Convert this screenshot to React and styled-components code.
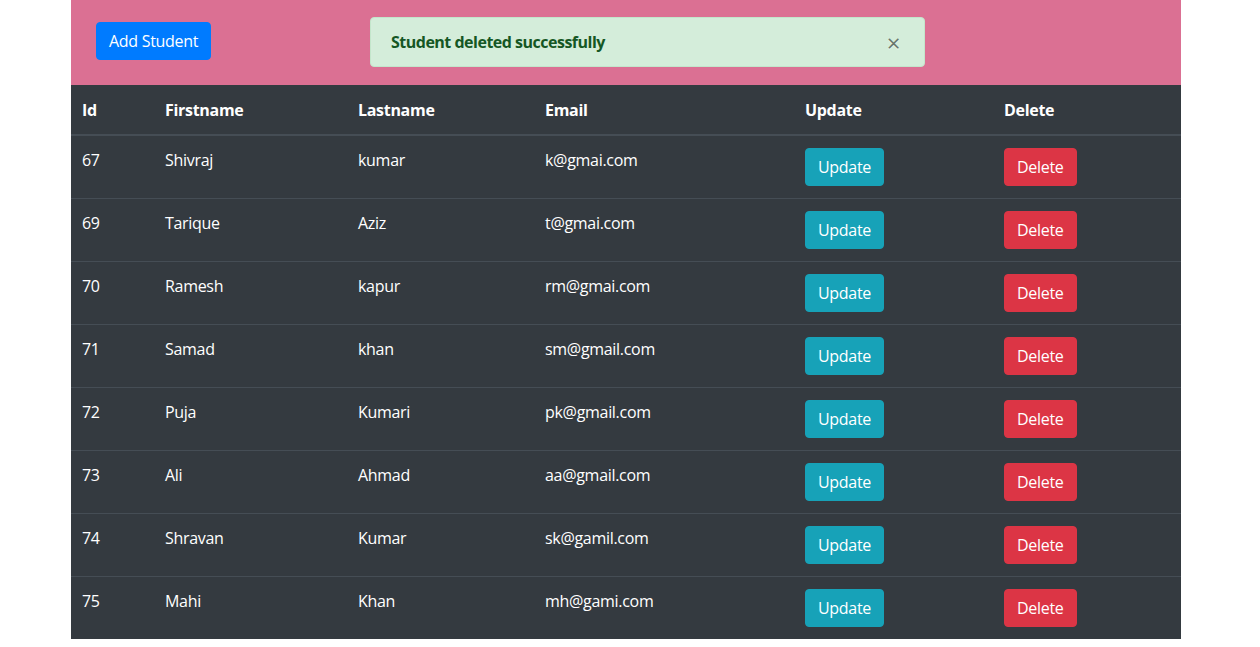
import React from "react";
import styled, { createGlobalStyle } from "styled-components";

const Global = createGlobalStyle`
  html, body { margin: 0; padding: 0; background: #fff; }
  body {
    font-family: "Open Sans", "Noto Sans", sans-serif;
    font-size: 16px;
    line-height: 1.5;
    letter-spacing: -0.3px;
    color: #212529;
  }
  * { box-sizing: border-box; }
`;

const Container = styled.div`
  width: 1110px;
  margin-left: 71px;
`;

const Header = styled.header`
  height: 85px;
  padding-bottom: 2px;
  background: palevioletred;
  display: grid;
  grid-template-columns: 299px 555px;
  align-items: center;
`;

const HeaderCell = styled.div`
  display: flex;
  align-items: center;
  padding-left: 25px;
`;

const Button = styled.button`
  font-family: inherit;
  font-size: 16px;
  line-height: 24px;
  letter-spacing: -0.3px;
  padding: 6px 12px;
  border: 1px solid ${(p) => p.$bg};
  border-radius: 4px;
  background: ${(p) => p.$bg};
  color: #fff;
  cursor: pointer;
  margin-top: ${(p) => p.$mt || 0}px;
`;

const Alert = styled.div`
  position: relative;
  width: 555px;
  height: 50px;
  padding: 12px 20px;
  background: #d4edda;
  border: 1px solid #c3e6cb;
  border-radius: 4px;
  color: #155724;
  font-weight: 700;
  letter-spacing: -0.5px;
  display: flex;
  align-items: center;
`;

const Close = styled.span`
  position: absolute;
  right: 24px;
  top: 50%;
  transform: translateY(-45%);
  font-size: 24px;
  font-weight: 400;
  line-height: 1;
  color: #000;
  opacity: 0.5;
  text-shadow: 0 1px 0 #fff;
`;

const Table = styled.table`
  width: 100%;
  border-collapse: collapse;
  background: #343a40;
  color: #fff;
`;

const Th = styled.th`
  text-align: left;
  font-weight: 700;
  padding: 13px 11px 12px;
  border-bottom: 2px solid #454d55;
  vertical-align: bottom;
`;

const Td = styled.td`
  padding: 12px 11px;
  border-top: 1px solid #454d55;
  vertical-align: top;
`;

const students = [
  [67, "Shivraj", "kumar", "k@gmai.com"],
  [69, "Tarique", "Aziz", "t@gmai.com"],
  [70, "Ramesh", "kapur", "rm@gmai.com"],
  [71, "Samad", "khan", "sm@gmail.com"],
  [72, "Puja", "Kumari", "pk@gmail.com"],
  [73, "Ali", "Ahmad", "aa@gmail.com"],
  [74, "Shravan", "Kumar", "sk@gamil.com"],
  [75, "Mahi", "Khan", "mh@gami.com"],
];

const widths = [83, 193, 187, 260, 199, 188];

export default function App() {
  return (
    <>
      <Global />
      <Container>
        <Header>
          <HeaderCell>
            <Button $bg="#007bff" $mt={-1}>Add Student</Button>
          </HeaderCell>
          <Alert>
            Student deleted successfully
            <Close>×</Close>
          </Alert>
        </Header>
        <Table>
          <colgroup>
            {widths.map((w, i) => (
              <col key={i} style={{ width: w }} />
            ))}
          </colgroup>
          <thead>
            <tr>
              <Th>Id</Th>
              <Th>Firstname</Th>
              <Th>Lastname</Th>
              <Th>Email</Th>
              <Th>Update</Th>
              <Th>Delete</Th>
            </tr>
          </thead>
          <tbody>
            {students.map(([id, f, l, e]) => (
              <tr key={id}>
                <Td>{id}</Td>
                <Td>{f}</Td>
                <Td>{l}</Td>
                <Td>{e}</Td>
                <Td>
                  <Button $bg="#17a2b8">Update</Button>
                </Td>
                <Td>
                  <Button $bg="#dc3545">Delete</Button>
                </Td>
              </tr>
            ))}
          </tbody>
        </Table>
      </Container>
    </>
  );
}
